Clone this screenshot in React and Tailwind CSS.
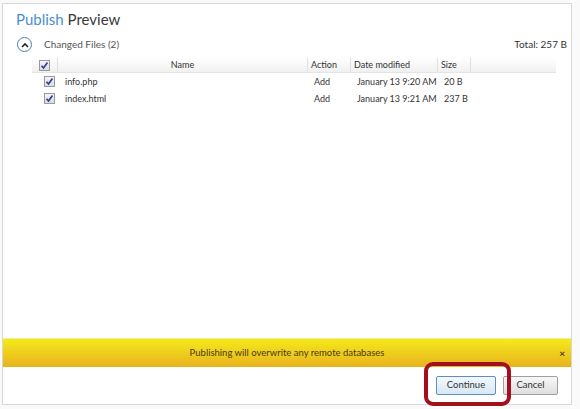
import React from "react";

const files = [
  { name: "info.php", action: "Add", date: "January 13 9:20 AM", size: "20 B" },
  { name: "index.html", action: "Add", date: "January 13 9:21 AM", size: "237 B" },
];

function Check() {
  return (
    <span className="flex h-[11px] w-[11px] items-center justify-center border border-[#9a9a9a] bg-gradient-to-b from-[#f4f4f4] to-[#dcdcdc]">
      <svg width="9" height="9" viewBox="0 0 9 9">
        <path d="M1.5 4.8 L3.5 7 L7.5 1.5" fill="none" stroke="#2a3aa0" strokeWidth="1.6" />
      </svg>
    </span>
  );
}

export default function App() {
  return (
    <div
      className="relative h-[409px] w-[580px] overflow-hidden bg-[#fafafa]"
      style={{ fontFamily: "Lato, 'Open Sans', sans-serif" }}
    >
      {/* dialog */}
      <div className="ml-[2px] mt-[3px] flex h-[402px] w-[570px] flex-col border border-[#d8d8d8] bg-white">
        <div className="px-[13px] pt-[5px] text-[15px] leading-[20px]">
          <span className="text-[#4a8fcc]">Publish</span>{" "}
          <span className="text-[#3a3a3a]">Preview</span>
        </div>

        <div className="mt-[8px] flex items-center pl-[14px] pr-[4px] text-[10px] text-[#444]">
          <span className="flex h-[15px] w-[15px] items-center justify-center rounded-full border border-[#4a7fae] bg-white">
            <svg width="8" height="6" viewBox="0 0 8 6">
              <path d="M1 5 L4 2 L7 5" fill="none" stroke="#222" strokeWidth="1.6" />
            </svg>
          </span>
          <span className="ml-[12px] text-[#555]">Changed Files (2)</span>
          <span className="ml-auto text-[#333]">Total: 257 B</span>
        </div>

        {/* table */}
        <div className="mt-[6px] ml-[29px] w-[524px] whitespace-nowrap text-[9px] text-[#333]">
          <div className="flex h-[15px] items-center border-b border-[#e4e4e4] bg-gradient-to-b from-white to-[#f0f0f0]">
            <div className="flex h-full w-[26px] items-center justify-center border-r border-[#e0e0e0]">
              <Check />
            </div>
            <div className="flex h-full w-[250px] items-center justify-center border-r border-[#e0e0e0]">Name</div>
            <div className="flex h-full w-[43px] items-center border-r border-[#e0e0e0] pl-[3px]">Action</div>
            <div className="flex h-full w-[87px] items-center border-r border-[#e0e0e0] pl-[3px]">Date modified</div>
            <div className="flex h-full w-[33px] items-center border-r border-[#e0e0e0] pl-[3px]">Size</div>
          </div>
          {files.map((f) => (
            <div key={f.name} className="flex h-[17px] items-center">
              <div className="flex w-[26px] justify-center pl-[8px]">
                <Check />
              </div>
              <div className="w-[250px] pl-[7px]">{f.name}</div>
              <div className="w-[43px] pl-[6px]">{f.action}</div>
              <div className="w-[87px] pl-[6px]">{f.date}</div>
              <div className="w-[33px] pl-[6px]">{f.size}</div>
            </div>
          ))}
        </div>

        <div className="flex-1" />

        {/* warning bar */}
        <div className="relative flex h-[29px] items-center justify-center border-t border-[#f6ef9a] bg-gradient-to-b from-[#f3ea1a] to-[#e8b21e] text-[9.5px] text-[#4a3a10]">
          Publishing will overwrite any remote databases
          <span className="absolute right-[6px] text-[10px] font-bold text-[#4a3a10]">×</span>
        </div>

        {/* footer */}
        <div className="flex h-[37px] items-center justify-end gap-[7px] pr-[13px] text-[9.5px] text-[#333]">
          <button className="h-[19px] w-[60px] rounded-[2px] border border-[#5c8fbf] bg-gradient-to-b from-[#f2f8fd] to-[#d8e8f5]">
            Continue
          </button>
          <button className="h-[19px] w-[55px] rounded-[2px] border border-[#a0a0a0] bg-gradient-to-b from-[#f8f8f8] to-[#dedede]">
            Cancel
          </button>
        </div>
      </div>

      {/* red annotation */}
      <div className="absolute left-[424px] top-[362px] h-[44px] w-[87px] rounded-[9px] border-[4px] border-[#a3101c]" />
    </div>
  );
}
